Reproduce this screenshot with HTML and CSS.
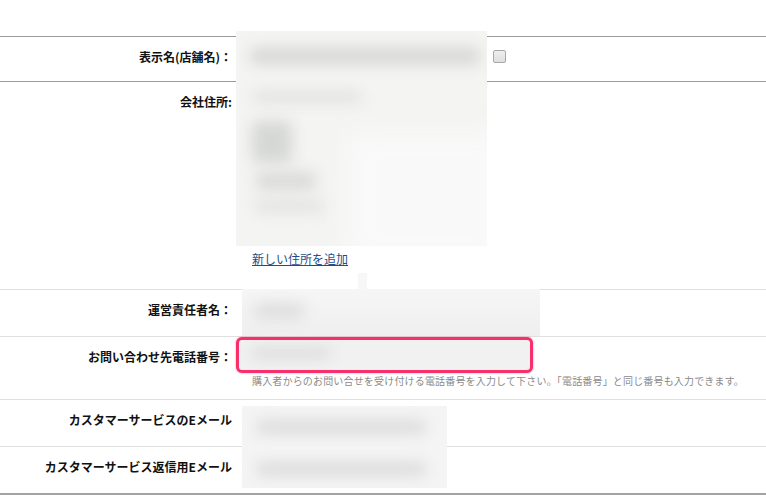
FILE: index.html
```html
<!DOCTYPE html>
<html lang="ja">
<head>
    <meta charset="UTF-8">
    <title>ストア設定</title>
    <link rel="stylesheet" href="styles.css">
</head>
<body>
    <div class="form">
        <div class="row row-name">
            <div class="label">表示名(店舗名)：</div>
            <div class="value">
                <span class="field-space"></span>
                <span class="checkbox"></span>
            </div>
        </div>
        <div class="row row-address">
            <div class="label">会社住所:</div>
            <div class="value">
                <a href="#" class="add-link">新しい住所を追加</a>
            </div>
        </div>
        <div class="row row-short">
            <div class="label">運営責任者名：</div>
            <div class="value"></div>
        </div>
        <div class="row row-phone">
            <div class="label">お問い合わせ先電話番号：</div>
            <div class="value">
                <div class="phone-input">
                    <span class="smear smear-phone"></span>
                </div>
                <p class="help">購入者からのお問い合せを受け付ける電話番号を入力して下さい。「電話番号」と同じ番号も入力できます。</p>
            </div>
        </div>
        <div class="row row-short">
            <div class="label">カスタマーサービスのEメール</div>
            <div class="value"></div>
        </div>
        <div class="row row-short row-last">
            <div class="label">カスタマーサービス返信用Eメール</div>
            <div class="value"></div>
        </div>

        <!-- ぼかし（個人情報） -->
        <div class="blur blur-store">
            <span class="smear s1"></span>
            <span class="smear s2"></span>
            <span class="smear s3"></span>
            <span class="smear s4"></span>
            <span class="smear s5"></span>
            <span class="fade"></span>
        </div>
        <div class="blur blur-tail"></div>
        <div class="blur blur-manager">
            <span class="smear s6"></span>
        </div>
        <div class="blur blur-mail">
            <span class="smear s7"></span>
            <span class="smear s8"></span>
        </div>
    </div>
</body>
</html>
```

FILE: styles.css
```css
body {
    margin: 0;
    padding-top: 36px;
    background: #fff;
    font-family: "Noto Sans CJK JP", "Noto Sans", sans-serif;
    color: #222;
}
.form {
    position: relative;
    width: 766px;
    border-bottom: 2px solid #a3a3a3;
}
.row {
    display: grid;
    grid-template-columns: 236px 1fr;
    border-top: 1px solid #e0e0e0;
    box-sizing: border-box;
}
.row-name {
    height: 45px;
    border-top-color: #9b9b9b;
}
.row-address {
    height: 208px;
    border-top-color: #9b9b9b;
}
.row-short {
    height: 47px;
}
.row-phone {
    height: 63px;
}
.label {
    text-align: right;
    padding: 12px 4px 0 0;
    font-size: 12px;
    line-height: 16px;
    font-weight: bold;
    color: #111;
}
.value {
    display: flex;
    flex-direction: column;
}
.row-name .value {
    flex-direction: row;
    align-items: flex-start;
}
.field-space {
    width: 257px;
}
.checkbox {
    width: 11px;
    height: 11px;
    margin-top: 13px;
    border: 1px solid #a8a8a8;
    border-radius: 2px;
    background: linear-gradient(#efefef, #dedede);
}
.row-address .value {
    justify-content: flex-end;
    padding: 0 0 22px 16px;
}
.add-link {
    font-size: 12px;
    line-height: 16px;
    color: #1d4d8a;
    text-decoration: underline;
}
.phone-input {
    position: relative;
    overflow: hidden;
    width: 291px;
    height: 30px;
    border: 3px solid #f7306c;
    border-radius: 6px;
    background: #f1f1f1;
    box-shadow: 0 0 2px rgba(247, 48, 108, 0.6);
}
.help {
    margin: 0 0 0 16px;
    font-size: 10px;
    line-height: 16px;
    letter-spacing: 0.17px;
    color: #8a8a8a;
    white-space: nowrap;
}
.blur {
    position: absolute;
    overflow: hidden;
    background: #f3f3f3;
}
.blur-store {
    left: 236px;
    top: -5px;
    width: 251px;
    height: 215px;
    background: #f4f4f3;
}
.blur-tail {
    left: 358px;
    top: 237px;
    width: 9px;
    height: 16px;
    background: #f7f7f7;
}
.blur-manager {
    left: 242px;
    top: 253px;
    width: 298px;
    height: 47px;
    background: linear-gradient(#f6f6f6, #efefef);
}
.blur-mail {
    left: 242px;
    top: 370px;
    width: 205px;
    height: 82px;
    background: #f4f4f4;
}
.smear {
    position: absolute;
    background: #d9d9d6;
    filter: blur(7px);
    border-radius: 6px;
}
.s1 { left: 14px; top: 16px; width: 230px; height: 18px; }
.s2 { left: 16px; top: 60px; width: 110px; height: 12px; background: #e2e2e0; }
.s3 { left: 16px; top: 90px; width: 40px; height: 42px; background: #d6d8d6; }
.s4 { left: 20px; top: 140px; width: 60px; height: 20px; background: #dcdcdb; }
.s5 { left: 18px; top: 168px; width: 70px; height: 14px; background: #e4e4e3; }
.fade {
    position: absolute;
    left: 110px;
    top: 100px;
    width: 160px;
    height: 130px;
    background: #f9f9f9;
    filter: blur(14px);
}
.s6 { left: 12px; top: 14px; width: 50px; height: 16px; background: #dedede; }
.s7 { left: 14px; top: 14px; width: 170px; height: 14px; background: #dcdcdc; }
.s8 { left: 14px; top: 56px; width: 170px; height: 14px; background: #dcdcdc; }
.smear-phone {
    left: 12px;
    top: 8px;
    width: 80px;
    height: 10px;
    background: #dadada;
}
```
